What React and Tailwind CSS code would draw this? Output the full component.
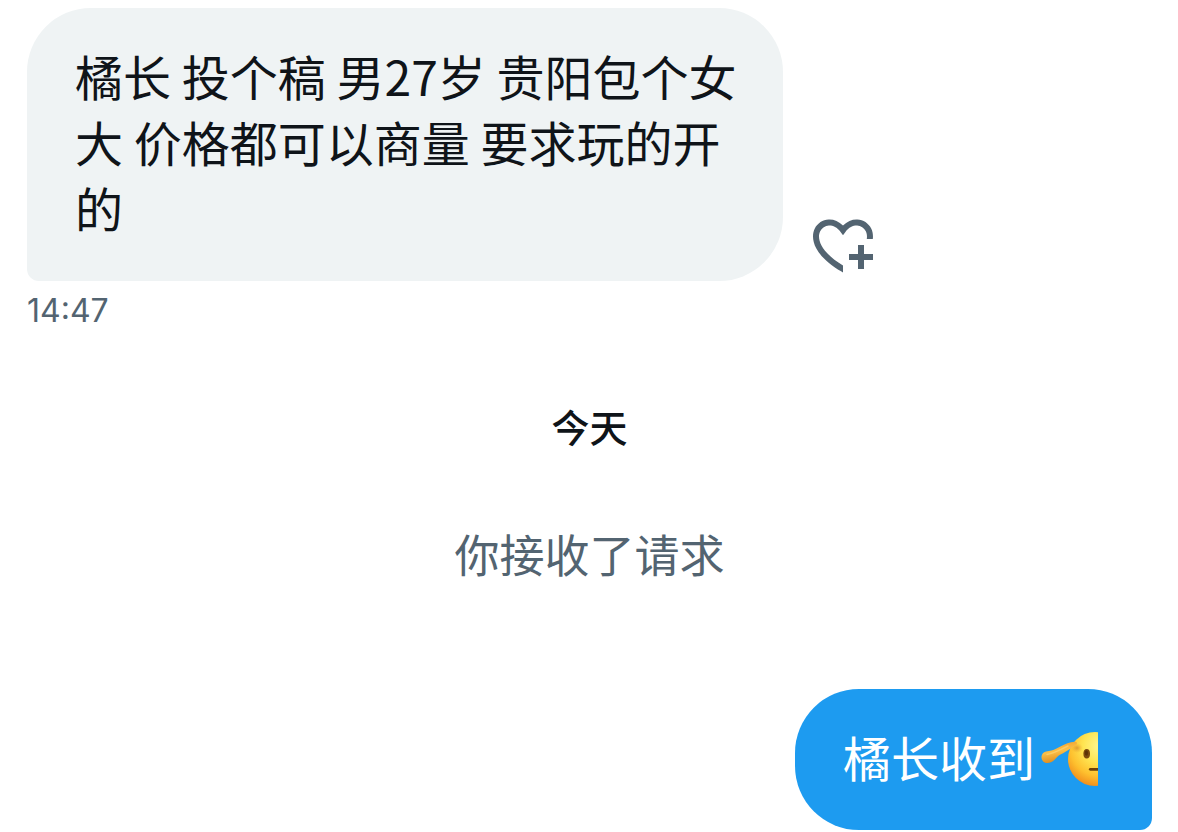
import { useState } from "react";

function HeartPlusIcon() {
    return (
        <svg viewBox="0 0 24 24" className="h-[72px] w-[72px]" fill="currentColor" aria-hidden="true">
            <path d="M17 12v3h-2.998v2h3v3h2v-3h3v-2h-3.001v-3H17zm-5 6.839c-3.871-2.34-6.053-4.639-7.127-6.609-1.112-2.04-1.031-3.7-.479-4.82.561-1.13 1.667-1.84 2.91-1.91 1.222-.06 2.68.51 3.892 2.16l.806 1.09.805-1.09c1.211-1.65 2.668-2.22 3.89-2.16 1.242.07 2.347.78 2.908 1.91.334.677.49 1.554.321 2.59h2.011c.153-1.283-.039-2.469-.539-3.48-.887-1.79-2.647-2.91-4.601-3.01-1.65-.09-3.367.56-4.796 2.01-1.43-1.45-3.147-2.1-4.798-2.01-1.954.1-3.714 1.22-4.601 3.01-.896 1.81-.846 4.17.514 6.67 1.353 2.48 4.003 5.12 8.382 7.67l.502.299v-2.32z" />
        </svg>
    );
}

function SaluteEmoji() {
    return (
        <svg viewBox="0 -3 69 66" className="h-[66px] w-[69px] shrink-0" role="img" aria-label="敬礼">
            <defs>
                <radialGradient id="face" gradientUnits="userSpaceOnUse" cx="65" cy="20" r="42">
                    <stop offset="0" stopColor="#fff894" />
                    <stop offset="0.4" stopColor="#ffe552" />
                    <stop offset="0.72" stopColor="#fec02e" />
                    <stop offset="1" stopColor="#f08a1c" />
                </radialGradient>
                <linearGradient id="arm" x1="0.3" y1="0" x2="0.6" y2="1">
                    <stop offset="0" stopColor="#ee9c2c" />
                    <stop offset="0.45" stopColor="#fabf48" />
                    <stop offset="1" stopColor="#d98217" />
                </linearGradient>
                <radialGradient id="shade">
                    <stop offset="0" stopColor="#c9762a" stopOpacity="0.6" />
                    <stop offset="1" stopColor="#e8992a" stopOpacity="0" />
                </radialGradient>
                <clipPath id="half">
                    <rect x="0" y="0" width="63" height="66" />
                </clipPath>
            </defs>
            <g clipPath="url(#half)">
                <circle cx="60" cy="33" r="27" fill="url(#face)" />
                <ellipse cx="42" cy="22" rx="6" ry="5" fill="url(#shade)" />
                <ellipse cx="51.7" cy="27.8" rx="3.3" ry="4.8" fill="#7c4a0c" />
                <ellipse cx="51.4" cy="27" rx="1.6" ry="2.8" fill="#5c3307" />
                <path d="M55.3 43.3H64" stroke="#6e4008" strokeWidth="2.8" strokeLinecap="round" />
            </g>
            <path
                d="M6.5 31.5C6.3 28.5 8 26.3 11 25.4C15 24.7 18 24.5 21.5 22.5C27 19.5 31 17.2 36 16.2C39 15.6 42 15.3 42 17.2C42 19 38.5 20.5 35.5 22.5C32 25 29 26.8 25.5 28.5C21.5 30.5 20.5 34 16.5 36C12 38.2 7 36.8 6.5 31.5Z"
                fill="url(#arm)"
            />
            <path d="M12 28.5C19 27.5 24 24 33 20" fill="none" stroke="#ffe08a" strokeWidth="1.5" strokeLinecap="round" opacity="0.5" />
        </svg>
    );
}

function App() {
    const [liked, setLiked] = useState(false);

    return (
        <main className="bg-white pt-2 pr-[26px] pl-[27px] text-[#0f1419] font-['Noto_Sans_CJK_SC',sans-serif]">
            <div className="flex items-end gap-6">
                <p className="max-w-[756px] rounded-[64px] rounded-bl-xl bg-[#eff3f4] pt-[34px] pr-10 pb-[41px] pl-12 text-[48px] leading-[66px]">
                    橘长 投个稿 男27岁 贵阳包个女大 价格都可以商量 要求玩的开的
                </p>
                <button
                    type="button"
                    aria-label="回应"
                    aria-pressed={liked}
                    onClick={() => setLiked(!liked)}
                    className="shrink-0 text-[#536471]"
                >
                    <HeartPlusIcon />
                </button>
            </div>
            <time className="mt-[10px] block font-['Inter',sans-serif] text-[32px] leading-10 text-[#536471]">14:47</time>

            <h2 className="mt-[71px] text-center text-[38px] leading-[48px] font-medium">今天</h2>
            <p className="mt-[72px] text-center text-[45px] leading-[64px] text-[#536471]">你接收了请求</p>

            <div className="mt-[103px] flex justify-end">
                <p className="flex rounded-[64px] rounded-br-xl bg-[#1d9bf0] px-12 pt-[34px] pb-[41px] text-[48px] leading-[66px] text-white">
                    橘长收到
                    <SaluteEmoji />
                </p>
            </div>
        </main>
    );
}

export default App;
